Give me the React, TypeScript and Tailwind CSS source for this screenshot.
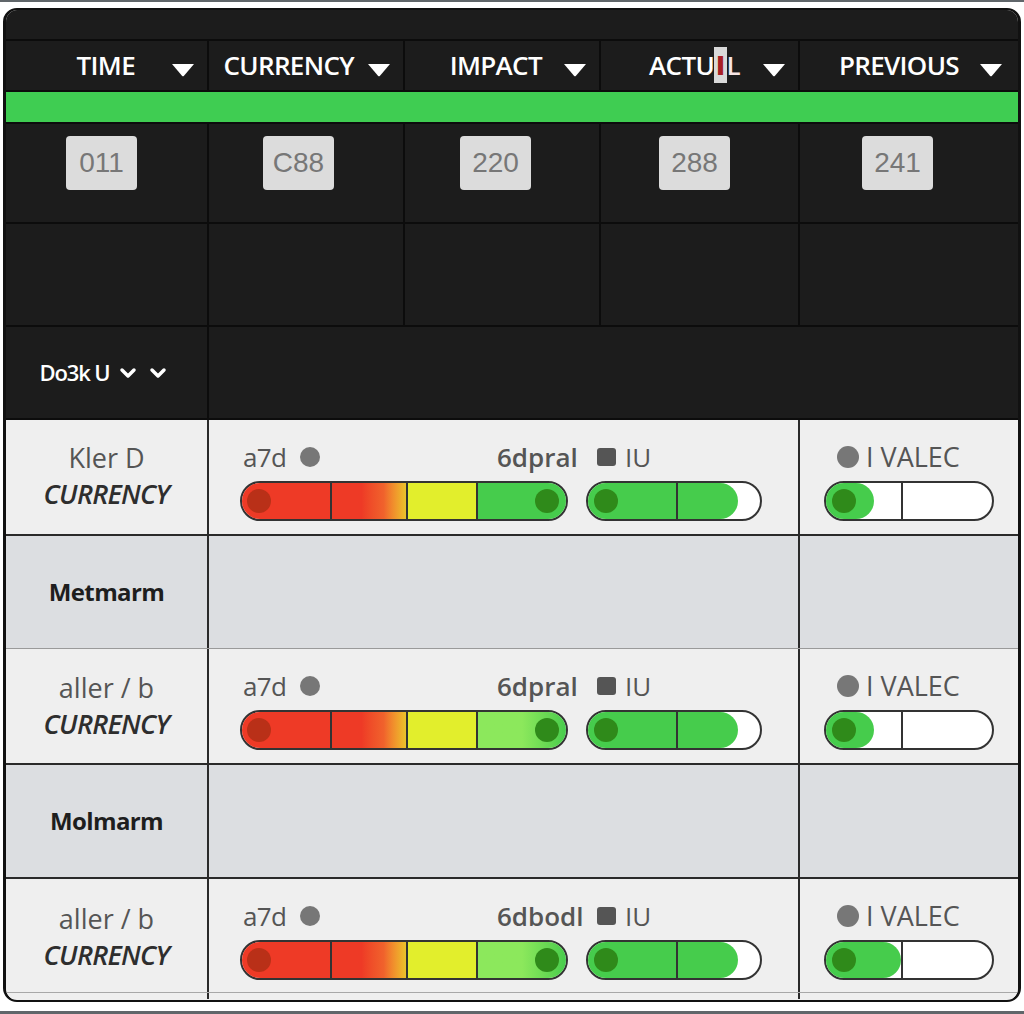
import React from "react";
import { ChevronDown } from "lucide-react";

const headers = [
  { label: "TIME", cell: "w-[203px] gap-[36px]" },
  { label: "CURRENCY", cell: "w-[196px] gap-[13px]" },
  { label: "IMPACT", cell: "w-[196px] gap-[21px]" },
  { label: "ACTUAL", cell: "w-[199px] gap-[22px]" },
  { label: "PREVIOUS", cell: "flex-1 gap-[20px] pr-[15px]" },
];

const chips = [
  { value: "011", cell: "w-[203px] pl-[60px]" },
  { value: "C88", cell: "w-[196px] pl-[54px]" },
  { value: "220", cell: "w-[196px] pl-[55px]" },
  { value: "288", cell: "w-[199px] pl-[58px]" },
  { value: "241", cell: "flex-1 pl-[62px]" },
];

const emptyCells = [
  "w-[203px] border-r-2",
  "w-[196px] border-r-2",
  "w-[196px] border-r-2",
  "w-[199px] border-r-2",
  "flex-1",
];

const Triangle = () => (
  <svg width="24" height="14" viewBox="0 0 24 14" className="mt-2 shrink-0">
    <path d="M1 1 H23 L12.8 13 Q12 13.6 11.2 13 Z" fill="#ffffff" />
  </svg>
);

const Dot = ({ className }: { className: string }) => (
  <span className={`absolute top-[6px] h-6 w-6 rounded-full ${className}`} />
);

const MeterBars = ({
  light,
  sub,
  unit,
  wideFill,
  lead,
}: {
  light: boolean;
  sub: string;
  unit: string;
  wideFill: boolean;
  lead: string;
}) => (
  <>
    <div className="flex-1 border-r-2 border-[#2a2a2a] pl-[31px] pt-[25px]">
      <div className="flex h-6 items-center whitespace-nowrap text-[26px] leading-6 text-[#555]">
        <span className="ml-[3px] w-[45px] tracking-tight">{lead}</span>
        <span className="ml-[12px] h-5 w-5 rounded-full bg-[#777]" />
        <span className="ml-[177px] w-[93px] text-[26px] font-semibold">{sub}</span>
        <span className="ml-[7px] h-[18px] w-[19px] rounded-[3px] bg-[#555]" />
        <span className="ml-[9px]">{unit}</span>
      </div>
      <div className="mt-3 flex gap-[18px]">
        <div className="relative flex h-10 w-[328px] overflow-hidden rounded-full border-[2.5px] border-[#333]">
          <div className="w-[90px] border-r-2 border-[#333] bg-[#ee3a26]" />
          <div className="w-[76px] border-r-2 border-[#333] bg-gradient-to-r from-[#ee3a26] from-40% via-[#f0622c] via-70% to-[#eac22a]" />
          <div className="w-[70px] border-r-2 border-[#333] bg-[#e2ee2c]" />
          <div
            className={
              light
                ? "flex-1 bg-gradient-to-r from-[#8ce85c] from-50% to-[#46cc4c]"
                : "flex-1 bg-[#46cc4c]"
            }
          />
          <Dot className="left-[5px] bg-[#b93018]" />
          <Dot className="right-[7px] bg-[#2f8a1a]" />
        </div>
        <div className="relative flex h-10 w-[176px] overflow-hidden rounded-full border-[2.5px] border-[#333] bg-white">
          <div className="w-[150px] rounded-r-full bg-[#46cc4c]" />
          <span className="absolute left-[88px] top-0 h-full w-[2px] bg-[#333]" />
          <Dot className="left-[6px] bg-[#2f8a1a]" />
        </div>
      </div>
    </div>
    <div className="flex-1 max-w-[218px] pl-[24px] pt-[25px]">
      <div className="flex h-6 items-center whitespace-nowrap text-[27px] leading-6 text-[#555]">
        <span className="ml-[13px] h-[22px] w-[22px] rounded-full bg-[#777]" />
        <span className="ml-[7px]">I VALEC</span>
      </div>
      <div className="mt-3 relative flex h-10 w-[170px] overflow-hidden rounded-full border-[2.5px] border-[#333] bg-white">
        <div
          className={
            wideFill
              ? "w-[75px] rounded-r-[18px] bg-[#46cc4c]"
              : "w-[48px] rounded-r-full bg-[#46cc4c]"
          }
        />
        <span className="absolute left-[75px] top-0 h-full w-[2px] bg-[#333]" />
        <Dot className="left-[6px] bg-[#2f8a1a]" />
      </div>
    </div>
  </>
);

const DataRow = ({
  height,
  top,
  name,
  lead,
  sub,
  light,
  wideFill,
  border,
  children,
}: {
  height: string;
  top: string;
  name: string;
  lead: string;
  sub: string;
  light: boolean;
  wideFill: boolean;
  border: string;
  children?: React.ReactNode;
}) => (
  <div className={`relative flex bg-[#efefef] ${height} ${border}`}>
    <div className="flex w-[203px] flex-col items-center border-r-2 border-[#2a2a2a] text-[27px] text-[#2e2e2e]">
      <span className={`${top} leading-7 text-[#555]`}>{name}</span>
      <span className="mt-2 font-semibold italic leading-7 tracking-tight">CURRENCY</span>
    </div>
    <MeterBars light={light} sub={sub} unit="IU" wideFill={wideFill} lead={lead} />
    {children}
  </div>
);

const BandRow = ({ name, height, border }: { name: string; height: string; border: string }) => (
  <div className={`flex bg-[#dcdee1] ${height} ${border}`}>
    <div className="flex w-[203px] items-center justify-center border-r-2 border-[#2a2a2a] text-[24px] font-bold tracking-tight text-[#1e1e1e]">
      {name}
    </div>
    <div className="w-[591px] border-r-2 border-[#2a2a2a]" />
    <div className="flex-1" />
  </div>
);

export default function App() {
  return (
    <div className="h-[1014px] w-[1024px] overflow-hidden bg-white font-['Open_Sans',sans-serif]">
      <div className="h-[2px] bg-[#60666a]" />
      <div className="mx-[3px] mt-[6px] h-[994px] overflow-hidden rounded-[14px] border-2 border-x-[3px] border-[#111] bg-[#efefef]">
        <div className="h-[31px] border-b-2 border-[#0c0c0c] bg-[#1c1c1c]" />

        <div className="flex h-[51px] border-b-2 border-[#0c0c0c] bg-[#1c1c1c] text-[26px] font-semibold tracking-tight text-white">
          {headers.map((h, i) => (
            <div
              key={h.label}
              className={`flex items-center justify-end whitespace-nowrap border-[#0c0c0c] pr-3 ${h.cell} ${i < 4 ? "border-r-2" : ""}`}
            >
              {h.label === "ACTUAL" ? (
                <span>
                  ACTU
                  <span className="bg-[#d9d9d9] px-[2px] font-extrabold text-[#a81f24]">I</span>
                  <span className="text-[#f6e4e4]">L</span>
                </span>
              ) : (
                <span>{h.label}</span>
              )}
              <Triangle />
            </div>
          ))}
        </div>

        <div className="h-[32px] border-b-2 border-[#0c0c0c] bg-[#3fcd52]" />

        <div className="flex h-[100px] border-b-2 border-[#0c0c0c] bg-[#1c1c1c]">
          {chips.map((c, i) => (
            <div key={c.value} className={`border-[#0c0c0c] pt-3 ${c.cell} ${i < 4 ? "border-r-2" : ""}`}>
              <div className="flex h-[54px] w-[71px] items-center justify-center rounded-[4px] bg-[#dcdcdc] font-['Liberation_Sans',sans-serif] text-[28px] text-[#777]">
                {c.value}
              </div>
            </div>
          ))}
        </div>

        <div className="flex h-[103px] border-b-2 border-[#0c0c0c] bg-[#1c1c1c]">
          {emptyCells.map((cell) => (
            <div key={cell} className={`border-[#0c0c0c] ${cell}`} />
          ))}
        </div>

        <div className="flex h-[93px] border-b-2 border-[#0c0c0c] bg-[#1c1c1c]">
          <div className="flex w-[203px] items-center justify-center gap-[6px] border-r-2 border-[#0c0c0c] pr-[4px] text-[22px] font-semibold tracking-tighter text-white">
            <span>Do3k U</span>
            <ChevronDown size={24} strokeWidth={3.5} />
            <ChevronDown size={24} strokeWidth={3.5} />
          </div>
        </div>

        <DataRow
          height="h-[116px]"
          top="mt-[24px]"
          name="Kler D"
          lead="a7d"
          sub="6dpral"
          light={false}
          wideFill={false}
          border="border-b-2 border-[#2a2a2a]"
        />
        <BandRow name="Metmarm" height="h-[113px]" border="border-b border-[#9a9a9a]" />
        <DataRow
          height="h-[116px]"
          top="mt-[25px]"
          name="aller / b"
          lead="a7d"
          sub="6dpral"
          light
          wideFill={false}
          border="border-b-2 border-[#2a2a2a]"
        />
        <BandRow name="Molmarm" height="h-[114px]" border="border-b-2 border-[#2a2a2a]" />
        <DataRow
          height="h-[120px]"
          top="mt-[26px]"
          name="aller / b"
          lead="a7d"
          sub="6dbodl"
          light
          wideFill
          border=""
        >
          <span className="absolute inset-x-0 bottom-[6px] h-px bg-[#a8a8a8]" />
        </DataRow>
      </div>
      <div className="mt-[9px] h-[3px] bg-[#60666a]" />
    </div>
  );
}
